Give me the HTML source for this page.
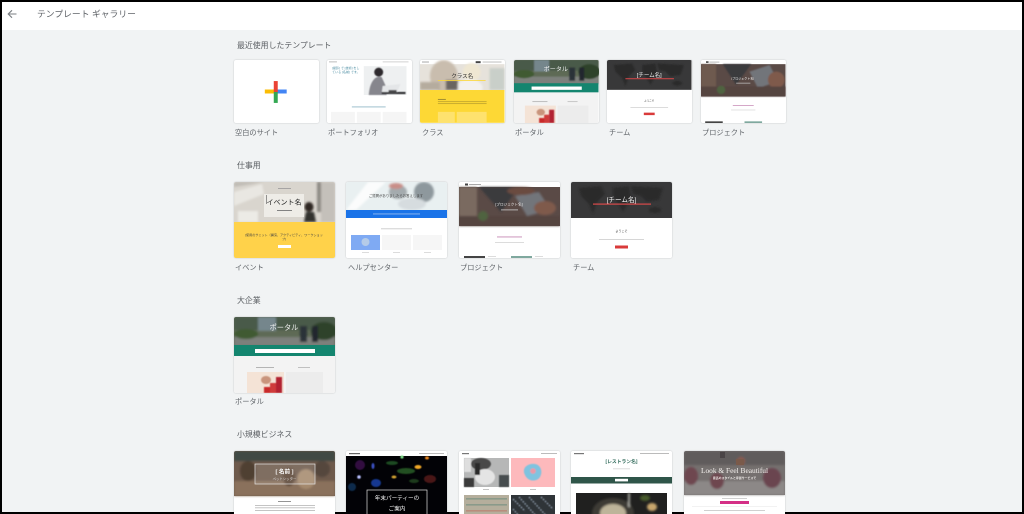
<!DOCTYPE html>
<html lang="ja"><head><meta charset="utf-8"><title>テンプレート ギャラリー</title>
<style>
*{box-sizing:border-box}
html,body{margin:0;padding:0;width:1024px;height:514px;overflow:hidden;background:#000}
body{font-family:"Liberation Sans","Noto Sans CJK JP",sans-serif}
#app{position:absolute;left:2px;top:2px;width:1020px;height:510px;background:#f1f3f4;overflow:hidden}
#frame{position:absolute;left:0;top:0;width:1024px;height:514px;overflow:hidden}
#hdr{position:absolute;left:2px;top:2px;width:1020px;height:28px;background:#fff}
.t{position:absolute;white-space:nowrap;color:#5f6368;line-height:12px}
.h{font-size:7.9px;color:#5a5e62}
.l{font-size:7.2px;color:#5f6368}
.c{position:absolute;background:#fff;border-radius:2px;box-shadow:0 0 1.5px rgba(60,64,67,.3);overflow:hidden}
.c svg{display:block;width:100%;height:100%;filter:blur(.35px)}
.r1{width:84.5px;height:63px;top:60px}
.r2{width:101px;height:76px}
svg text{font-family:"Liberation Sans","Noto Sans CJK JP",sans-serif}
</style></head><body>
<div id="frame">
<div id="app"></div>
<div id="hdr"></div>
<svg style="position:absolute;left:6px;top:8px" width="12" height="12" viewBox="0 0 12 12"><path d="M10.5 6H2.5M6 2.3L2.2 6L6 9.7" fill="none" stroke="#7a7e82" stroke-width="1.1"/></svg>
<div class="t" style="left:37px;top:8px;font-size:8.8px">テンプレート ギャラリー</div>

<svg width="0" height="0" style="position:absolute"><defs>
<filter id="b1" x="-20%" y="-20%" width="140%" height="140%"><feGaussianBlur stdDeviation="1"/></filter>
<filter id="b0" x="-20%" y="-20%" width="140%" height="140%"><feGaussianBlur stdDeviation=".5"/></filter>
</defs></svg>

<div class="t h" style="left:237px;top:40px">最近使用したテンプレート</div>

<div class="c r1" style="left:234px">
<svg viewBox="0 0 85 63"><rect x="31" y="29.5" width="11" height="4" fill="#fbbc04"/><rect x="42" y="29.5" width="11" height="4" fill="#4285f4"/><rect x="40" y="21" width="4" height="11" fill="#ea4335"/><rect x="40" y="32" width="4" height="11" fill="#34a853"/></svg>
</div>
<div class="c r1" style="left:327px">
<svg viewBox="0 0 85 63"><rect width="85" height="63" fill="#fff"/>
<rect x="2" y="1" width="8" height="1.3" fill="#ccc"/><rect x="56" y="1" width="26" height="1.3" fill="#ddd"/>
<text x="5" y="9" font-size="3.1" fill="#4d8ea3">[撮影] で [技術] をし</text><text x="5" y="13" font-size="3.1" fill="#4d8ea3">ている [名前] です。</text>
<rect x="37" y="6" width="43" height="29" fill="#eef0f1"/>
<g filter="url(#b0)"><ellipse cx="52" cy="12" rx="4.5" ry="4.5" fill="#2d2a2e"/><path d="M42 35C43 20 50 15 55 17L60 28L60 35Z" fill="#86868d"/><path d="M56 26L74 24L70 33L55 33Z" fill="#e4e6e8"/><rect x="55" y="32" width="24" height="2" fill="#26262a"/><rect x="62" y="30" width="8" height="3" fill="#48484c"/></g>
<rect x="25" y="46.5" width="34" height="1" fill="#9dc0cd"/>
<rect x="4" y="52" width="24" height="11" fill="#f5f5f5"/><rect x="30" y="52" width="24" height="11" fill="#f5f5f5"/><rect x="56" y="52" width="24" height="11" fill="#f5f5f5"/></svg>
</div>
<div class="c r1" style="left:420px">
<svg viewBox="0 0 85 63"><rect width="85" height="63" fill="#fff"/>
<rect y="4" width="85" height="26" fill="#e6e2db"/>
<g filter="url(#b1)"><ellipse cx="24" cy="16" rx="14" ry="16" fill="#c9bdae"/><ellipse cx="52" cy="12" rx="9" ry="9" fill="#efe7d2"/><rect x="70" y="8" width="15" height="22" fill="#c9cfc9"/><ellipse cx="50" cy="28" rx="13" ry="9" fill="#f3f1ee"/><rect x="0" y="22" width="20" height="8" fill="#b5ac9e"/><rect x="26" y="20" width="12" height="10" fill="#6a6560"/></g>
<rect x="2" y="1.2" width="7" height="1.3" fill="#bbb"/><rect x="56" y="1" width="5" height="2" fill="#444"/><rect x="63" y="1.2" width="19" height="1.3" fill="#ccc"/>
<text x="42.5" y="18" font-size="5.6" fill="#2b2b2b" text-anchor="middle">クラス名</text>
<rect x="18" y="20" width="48" height=".8" fill="#fdd835"/>
<rect y="30" width="85" height="33" fill="#fdd835"/>
<rect x="18" y="39" width="8" height=".8" fill="#8a7a30"/><rect x="18" y="41.5" width="49" height=".6" fill="#a8912a"/><rect x="18" y="43.5" width="49" height=".6" fill="#a8912a"/>
<rect x="18" y="52" width="17" height="11" fill="#fee26e"/><rect x="37" y="52" width="30" height="11" fill="#fee26e"/></svg>
</div>
<div class="c r1" style="left:514px">
<svg viewBox="0 0 101 76" preserveAspectRatio="none"><rect width="101" height="76" fill="#f3f3f3"/>
<rect width="101" height="29" fill="#5e6a55"/>
<g filter="url(#b1)"><rect y="0" width="101" height="13" fill="#4a5a48"/><rect x="24" y="0" width="18" height="14" fill="#75868c"/><rect x="0" y="20" width="101" height="9" fill="#7d807c"/><ellipse cx="12" cy="17" rx="12" ry="5" fill="#3f5a31"/><ellipse cx="90" cy="14" rx="13" ry="9" fill="#2e4329"/><rect x="66" y="9" width="7" height="16" fill="#2c3038"/><rect x="78" y="9" width="6" height="16" fill="#22262e"/></g>
<text x="50" y="13" font-size="7.2" fill="#f4f4f4" text-anchor="middle">ポータル</text>
<rect y="28" width="101" height="11" fill="#14856f"/>
<rect x="21" y="32" width="60" height="4" fill="#fff"/>
<rect x="22" y="50" width="18" height=".7" fill="#999"/><rect x="64" y="50" width="12" height=".7" fill="#aaa"/>
<rect x="13" y="55" width="37" height="21" fill="#f4e3d6"/>
<g filter="url(#b0)"><rect x="30" y="70" width="8" height="6" fill="#c82a2c"/><ellipse cx="32" cy="63" rx="5" ry="4" fill="#c9947c"/><rect x="42" y="60" width="6" height="16" fill="#b22430"/><rect x="36" y="66" width="6" height="10" fill="#cf3a3a"/></g>
<rect x="52" y="55" width="37" height="21" fill="#ececec"/></svg>
</div>
<div class="c r1" style="left:607px">
<svg viewBox="0 0 101 76" preserveAspectRatio="none"><rect width="101" height="76" fill="#fff"/>
<rect width="101" height="36" fill="#383839"/>
<g filter="url(#b1)" fill="#2b2b2c"><path d="M8 6L30 4L34 12L26 20L22 32L18 22L10 14Z"/><path d="M42 6L58 4L60 16L52 30L46 20L42 14Z"/><path d="M60 4L92 6L88 18L76 20L70 14L62 12Z"/><ellipse cx="84" cy="28" rx="6" ry="3"/></g>
<text x="50.5" y="20.5" font-size="6.6" fill="#f0f0f0" text-anchor="middle">[チーム名]</text>
<rect x="22" y="22" width="58" height="1.2" fill="#d9494a"/>
<text x="50.5" y="50" font-size="3" fill="#444" text-anchor="middle">ようこそ</text>
<rect x="28" y="57" width="45" height=".7" fill="#c4c4c4"/>
<rect x="44" y="63.5" width="13" height="3" fill="#d93a3a"/></svg>
</div>
<div class="c r1" style="left:701px">
<svg viewBox="0 0 101 76" preserveAspectRatio="none"><rect width="101" height="76" fill="#fff"/>
<rect x="6" y="1.5" width="3" height="2" fill="#444"/><rect x="10" y="2" width="12" height="1" fill="#aaa"/>
<rect y="5" width="101" height="39" fill="#5a4a46"/>
<g filter="url(#b1)"><path d="M26 5L60 5L42 30Z" fill="#3a3a3c"/><path d="M58 14L82 6L92 26L68 34Z" fill="#72757a"/><ellipse cx="90" cy="24" rx="10" ry="10" fill="#7f5a4c"/><rect x="0" y="5" width="18" height="39" fill="#6e5a50"/><rect x="0" y="32" width="101" height="12" fill="#54443f"/><ellipse cx="24" cy="36" rx="5" ry="5" fill="#4f6440"/></g>
<text x="50" y="23.5" font-size="3.6" fill="#f1f1f1" text-anchor="middle">[プロジェクト名]</text>
<rect x="42" y="27.5" width="17" height=".8" fill="#ccc"/>
<rect x="38" y="54.5" width="25" height=".9" fill="#c78ab5"/>
<rect x="36" y="60" width="29" height=".6" fill="#c4c4c4"/>
<rect x="5" y="74" width="21" height="2" fill="#444"/><rect x="52" y="74" width="21" height="2" fill="#7fa89e"/></svg>
</div>
<div class="t l" style="left:235px;top:127px">空白のサイト</div>
<div class="t l" style="left:328px;top:127px">ポートフォリオ</div>
<div class="t l" style="left:422px;top:127px">クラス</div>
<div class="t l" style="left:515px;top:127px">ポータル</div>
<div class="t l" style="left:609px;top:127px">チーム</div>
<div class="t l" style="left:702px;top:127px">プロジェクト</div>

<div class="t h" style="left:237px;top:160px">仕事用</div>

<div class="c r2" style="left:234px;top:182px">
<svg viewBox="0 0 101 76"><rect width="101" height="76" fill="#fff"/>
<rect width="101" height="40" fill="#d9d5ce"/>
<g filter="url(#b1)"><path d="M0 5L30 0L0 0Z" fill="#c0bcb5"/><path d="M0 10L28 2L30 12L0 24Z" fill="#e9e7e2"/><rect x="4" y="29" width="20" height="11" fill="#ecebe6"/><rect x="83" y="0" width="4" height="30" fill="#8e8a84"/><rect x="87" y="0" width="14" height="40" fill="#c4c0ba"/><ellipse cx="75" cy="25" rx="4.5" ry="5" fill="#2d2624"/><path d="M70 40L72 30L80 30L82 40Z" fill="#33302e"/></g>
<rect x="30" y="12" width="40" height="23" fill="#eeece7"/>
<text x="50" y="22.5" font-size="7" fill="#222" text-anchor="middle">イベント名</text>
<rect x="32" y="13" width=".6" height="9" fill="#555"/>
<rect x="44" y="6" width="13" height=".8" fill="#999"/><rect x="43" y="28" width="15" height=".9" fill="#777"/>
<rect y="40" width="101" height="36" fill="#ffd24a"/>
<text x="50" y="54" font-size="3.1" fill="#444" text-anchor="middle">[使用のサミット（講演、アクティビティ、ワークショッ</text>
<text x="50" y="58" font-size="3.1" fill="#444" text-anchor="middle">プ]</text>
<rect x="44" y="63" width="13" height="3" fill="#fff"/></svg>
</div>
<div class="c r2" style="left:346px;top:182px">
<svg viewBox="0 0 101 76"><rect width="101" height="76" fill="#fff"/>
<rect width="101" height="28" fill="#e9f0f1"/>
<g filter="url(#b1)"><path d="M0 28L22 0L40 0L10 28Z" fill="#fbfcfc"/><ellipse cx="52" cy="10" rx="9" ry="7" fill="#a4abae"/><ellipse cx="78" cy="10" rx="10" ry="10" fill="#8e989d"/><ellipse cx="50" cy="4" rx="7" ry="3" fill="#c98e88"/><ellipse cx="66" cy="22" rx="14" ry="6" fill="#d6dcdf"/></g>
<text x="50" y="15" font-size="3.4" fill="#444" text-anchor="middle">ご質問がありましたらお答えします</text>
<rect y="28" width="101" height="8" fill="#1a73e8"/>
<rect x="27" y="31.5" width="47" height=".9" fill="#8fb8f0"/>
<rect x="35" y="46.5" width="31" height=".7" fill="#bbb"/>
<rect x="5" y="53" width="29" height="15" fill="#7faaf3"/><circle cx="19.5" cy="60" r="4" fill="#b4cbe8"/>
<rect x="36" y="53" width="29" height="15" fill="#f6f6f6"/><rect x="67" y="53" width="29" height="15" fill="#f6f6f6"/>
<rect x="16" y="70" width="7" height=".7" fill="#ccc"/><rect x="47" y="70" width="7" height=".7" fill="#ccc"/><rect x="78" y="70" width="7" height=".7" fill="#ccc"/></svg>
</div>
<div class="c r2" style="left:459px;top:182px">
<svg viewBox="0 0 101 76"><rect width="101" height="76" fill="#fff"/>
<rect x="6" y="1.5" width="3" height="2" fill="#444"/><rect x="10" y="2" width="12" height="1" fill="#aaa"/>
<rect y="5" width="101" height="39" fill="#5a4a46"/>
<g filter="url(#b1)"><path d="M20 5L60 5L42 30Z" fill="#3a3a3c"/><path d="M56 14L80 10L92 28L68 34Z" fill="#72757a"/><ellipse cx="86" cy="26" rx="11" ry="7" fill="#7f5a4c"/><rect x="0" y="5" width="18" height="39" fill="#7a6a60"/><rect x="0" y="34" width="101" height="10" fill="#54443f"/><ellipse cx="24" cy="34" rx="5" ry="5" fill="#4f6440"/><ellipse cx="62" cy="9" rx="14" ry="4" fill="#6a4c40"/></g>
<text x="50" y="23.5" font-size="3.6" fill="#f1f1f1" text-anchor="middle">[プロジェクト名]</text>
<rect x="42" y="27.5" width="17" height=".8" fill="#ccc"/>
<rect x="38" y="54.5" width="25" height=".9" fill="#c78ab5"/>
<rect x="36" y="60" width="29" height=".6" fill="#c4c4c4"/>
<rect x="5" y="74" width="21" height="2" fill="#444"/><rect x="29" y="74" width="8" height=".7" fill="#ccc"/><rect x="52" y="74" width="21" height="2" fill="#7fa89e"/><rect x="76" y="74" width="8" height=".7" fill="#ccc"/></svg>
</div>
<div class="c r2" style="left:571px;top:182px">
<svg viewBox="0 0 101 76"><rect width="101" height="76" fill="#fff"/>
<rect width="101" height="36" fill="#383839"/>
<g filter="url(#b1)" fill="#2b2b2c"><path d="M8 6L30 4L34 12L26 20L22 32L18 22L10 14Z"/><path d="M42 6L58 4L60 16L52 30L46 20L42 14Z"/><path d="M60 4L92 6L88 18L76 20L70 14L62 12Z"/><ellipse cx="84" cy="28" rx="6" ry="3"/></g>
<text x="50.5" y="20" font-size="6.6" fill="#f0f0f0" text-anchor="middle">[チーム名]</text>
<rect x="22" y="21.5" width="58" height="1.2" fill="#d9494a"/>
<text x="50.5" y="50" font-size="3" fill="#444" text-anchor="middle">ようこそ</text>
<rect x="28" y="57" width="45" height=".7" fill="#c4c4c4"/>
<rect x="44" y="63.5" width="13" height="3" fill="#d93a3a"/></svg>
</div>
<div class="t l" style="left:235px;top:262px">イベント</div>
<div class="t l" style="left:348px;top:262px">ヘルプセンター</div>
<div class="t l" style="left:460px;top:262px">プロジェクト</div>
<div class="t l" style="left:573px;top:262px">チーム</div>

<div class="t h" style="left:237px;top:295px">大企業</div>

<div class="c r2" style="left:234px;top:317px">
<svg viewBox="0 0 101 76"><rect width="101" height="76" fill="#f3f3f3"/>
<rect width="101" height="29" fill="#5e6a55"/>
<g filter="url(#b1)"><rect y="0" width="101" height="13" fill="#4a5a48"/><rect x="24" y="0" width="18" height="14" fill="#75868c"/><rect x="0" y="20" width="101" height="9" fill="#7d807c"/><ellipse cx="12" cy="17" rx="12" ry="5" fill="#3f5a31"/><ellipse cx="90" cy="14" rx="13" ry="9" fill="#2e4329"/><rect x="66" y="9" width="7" height="16" fill="#2c3038"/><rect x="78" y="9" width="6" height="16" fill="#22262e"/></g>
<text x="50" y="13" font-size="7.2" fill="#f4f4f4" text-anchor="middle">ポータル</text>
<rect y="28" width="101" height="11" fill="#14856f"/>
<rect x="21" y="32" width="60" height="4" fill="#fff"/>
<rect x="22" y="50" width="18" height=".7" fill="#999"/><rect x="64" y="50" width="12" height=".7" fill="#aaa"/>
<rect x="13" y="55" width="37" height="21" fill="#f4e3d6"/>
<g filter="url(#b0)"><rect x="30" y="70" width="8" height="6" fill="#c82a2c"/><ellipse cx="32" cy="63" rx="5" ry="4" fill="#c9947c"/><rect x="42" y="60" width="6" height="16" fill="#b22430"/><rect x="36" y="66" width="6" height="10" fill="#cf3a3a"/></g>
<rect x="52" y="55" width="37" height="21" fill="#ececec"/></svg>
</div>
<div class="t l" style="left:235px;top:396px">ポータル</div>

<div class="t h" style="left:237px;top:429px">小規模ビジネス</div>

<div class="c r2" style="left:234px;top:451px">
<svg viewBox="0 0 101 76"><rect width="101" height="76" fill="#fff"/>
<rect width="101" height="45" fill="#6e5a4c"/>
<g filter="url(#b1)"><rect width="101" height="10" fill="#3f4a44"/><rect x="0" y="30" width="101" height="15" fill="#8a715c"/><ellipse cx="72" cy="28" rx="9" ry="10" fill="#a58a6e"/><ellipse cx="14" cy="20" rx="8" ry="10" fill="#4f3f33"/><ellipse cx="55" cy="26" rx="6" ry="9" fill="#5a4435"/><ellipse cx="88" cy="18" rx="8" ry="8" fill="#55473c"/></g>
<rect x="21" y="13" width="60" height="20" fill="#ffffff" fill-opacity=".12" stroke="#e5e5e5" stroke-width=".7"/>
<text x="50.5" y="22.5" font-size="5.6" fill="#fff" text-anchor="middle" font-weight="700">[ 名前 ]</text>
<text x="50.5" y="29" font-size="3.4" fill="#ddd" text-anchor="middle">ペットシッター</text>
<rect x="44" y="50" width="13" height=".9" fill="#888"/>
<rect x="21" y="54" width="60" height=".7" fill="#aaa"/><rect x="21" y="56.5" width="60" height=".7" fill="#aaa"/><rect x="21" y="59" width="60" height=".7" fill="#aaa"/></svg>
</div>
<div class="c r2" style="left:346px;top:451px">
<svg viewBox="0 0 101 76"><rect width="101" height="76" fill="#fff"/>
<rect x="3" y="2" width="11" height="1.2" fill="#666"/><rect x="73" y="2" width="25" height="1" fill="#bbb"/>
<rect y="5" width="101" height="71" fill="#020206"/>
<g filter="url(#b0)"><circle cx="56" cy="6" r="1.6" fill="#7fe08a"/><ellipse cx="72" cy="16" rx="3.5" ry="2" fill="#f0a828"/><ellipse cx="81" cy="7" rx="2" ry="1.5" fill="#ef8a20"/><ellipse cx="48" cy="26" rx="2.5" ry="1.5" fill="#d0a030"/><circle cx="13" cy="26" r="1.8" fill="#b8c0ff"/><ellipse cx="27" cy="15" rx="1.5" ry="3" fill="#3a50c0"/><ellipse cx="30" cy="32" rx="5" ry="4" fill="#143890"/><ellipse cx="60" cy="20" rx="9" ry="3" fill="#245020"/><ellipse cx="46" cy="12" rx="6" ry="2" fill="#1c4a20"/><ellipse cx="14" cy="14" rx="5" ry="5" fill="#301040"/><ellipse cx="84" cy="28" rx="6" ry="4" fill="#4a1818"/><ellipse cx="6" cy="36" rx="4" ry="4" fill="#0a2c4c"/><ellipse cx="68" cy="30" rx="5" ry="2" fill="#1d3a1c"/></g>
<rect x="21" y="39" width="60" height="37" fill="#000" fill-opacity=".35" stroke="#e0e0e0" stroke-width=".7"/>
<text x="51" y="49" font-size="5.6" fill="#fff" text-anchor="middle">年末パーティーの</text>
<text x="51" y="59.5" font-size="5.6" fill="#fff" text-anchor="middle">ご案内</text></svg>
</div>
<div class="c r2" style="left:459px;top:451px">
<svg viewBox="0 0 101 76"><rect width="101" height="76" fill="#fff"/>
<rect x="3" y="2" width="7" height="1.2" fill="#777"/><rect x="82" y="2" width="16" height="1" fill="#bbb"/>
<rect x="5" y="7" width="45" height="29" fill="#b6b7b7"/>
<g filter="url(#b0)"><ellipse cx="22" cy="13" rx="10" ry="6" fill="#4a4a4a"/><ellipse cx="26" cy="26" rx="10" ry="8" fill="#e4e4e4"/><rect x="5" y="27" width="10" height="9" fill="#3b3b3b"/><rect x="40" y="24" width="10" height="12" fill="#474d50"/><rect x="5" y="7" width="7" height="14" fill="#dedede"/><rect x="16" y="12" width="5" height="12" fill="#2c2c2c"/></g>
<rect x="52" y="7" width="44" height="29" fill="#fdb9bc"/>
<g filter="url(#b0)"><path d="M66 24C62 16 70 12 76 13C82 14 84 21 81 26C78 31 69 31 66 24Z" fill="#7fc3df"/><circle cx="74" cy="20" r="2.8" fill="#e89aa8"/></g>
<rect x="24" y="38" width="6" height=".7" fill="#aaa"/><rect x="71" y="38" width="6" height=".7" fill="#aaa"/>
<rect x="5" y="44" width="45" height="32" fill="#b5ae9c"/>
<g fill="#8a9a8a"><rect x="7" y="47" width="41" height="1.6"/><rect x="7" y="53" width="41" height="1.6"/><rect x="7" y="59" width="41" height="1.6" fill="#b98d7d"/><rect x="7" y="65" width="41" height="1.6"/><rect x="7" y="71" width="41" height="1.6"/></g>
<rect x="52" y="44" width="44" height="32" fill="#2f3438"/>
<g filter="url(#b0)"><path d="M54 48L66 60M60 46L78 66M70 46L92 70M82 46L94 58M54 58L68 74" stroke="#808c9a" stroke-width="1.6" stroke-dasharray="1.6 1.2" fill="none"/></g></svg>
</div>
<div class="c r2" style="left:571px;top:451px">
<svg viewBox="0 0 101 76"><rect width="101" height="76" fill="#fff"/>
<rect x="3" y="2" width="10" height="1.2" fill="#777"/><rect x="69" y="2" width="29" height="1" fill="#bbb"/>
<text x="50.5" y="12" font-size="4.8" fill="#2f6a5a" text-anchor="middle" font-weight="700">[レストラン名]</text>
<rect x="42" y="17.5" width="17" height=".7" fill="#ccc"/>
<rect y="26" width="101" height="6.5" fill="#2f5549"/>
<rect x="44" y="27.8" width="13" height="2.6" fill="#fff"/>
<rect x="5" y="42" width="91" height="34" fill="#20201f"/>
<g filter="url(#b1)"><ellipse cx="42" cy="62" rx="21" ry="15" fill="#3d3a36"/><ellipse cx="42" cy="62" rx="13" ry="9" fill="#bdb49a"/><ellipse cx="81" cy="56" rx="5" ry="4" fill="#c7a56c"/><ellipse cx="74" cy="47" rx="5" ry="3" fill="#475a2a"/><rect x="57" y="42" width="2" height="14" fill="#a8a8a0"/></g></svg>
</div>
<div class="c r2" style="left:684px;top:451px">
<svg viewBox="0 0 101 76"><rect width="101" height="76" fill="#fff"/>
<rect width="101" height="44" fill="#75706f"/>
<g filter="url(#b1)"><rect width="101" height="14" fill="#605b5b"/><rect y="30" width="101" height="14" fill="#8c8887"/><ellipse cx="7" cy="25" rx="7" ry="9" fill="#6e4650"/><ellipse cx="33" cy="30" rx="7" ry="8" fill="#6e4650"/><ellipse cx="88" cy="27" rx="9" ry="10" fill="#6a4450"/><ellipse cx="57" cy="10" rx="4" ry="4" fill="#8a5a50"/></g>
<rect x="36" y="1" width="5" height="6" fill="#4a4446"/><rect x="52" y="8" width="8" height="6" fill="#7a5a4a"/>
<text x="50.5" y="22" font-size="7.4" fill="#f5f1ee" text-anchor="middle" style="font-family:'Liberation Serif',serif">Look &amp; Feel Beautiful</text>
<text x="50.5" y="28" font-size="2.9" fill="#f0ecea" text-anchor="middle" font-weight="700">最高のスタイルと専属サービスで</text>
<rect x="38" y="47" width="25" height=".7" fill="#bbb"/>
<rect x="36" y="50" width="29" height="3" fill="#d42f86"/>
<rect x="8" y="55.5" width="85" height=".5" fill="#e5e5e5"/>
<rect x="20" y="59" width="61" height=".7" fill="#bbb"/></svg>
</div>
</div>
</body></html>
